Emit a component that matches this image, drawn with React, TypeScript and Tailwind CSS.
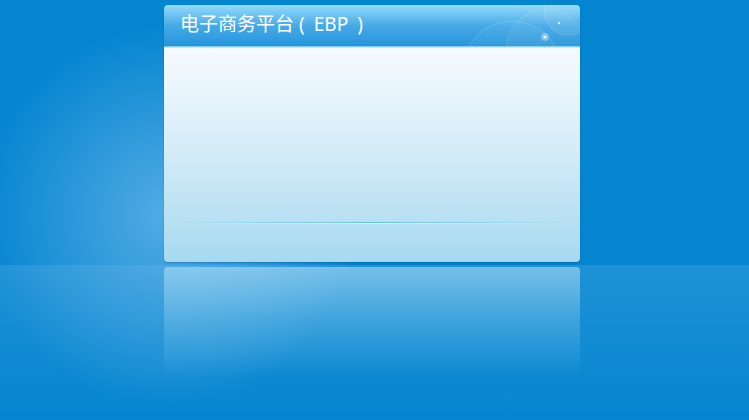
export default function App() {
  return (
    <div
      className="relative h-[420px] w-[749px] overflow-hidden bg-[#0585d0] bg-[radial-gradient(ellipse_190px_190px_at_170px_215px,rgba(110,185,235,0.75),rgba(5,133,208,0)_100%)]"
      style={{ fontFamily: '"Noto Sans", "Noto Sans CJK SC", sans-serif' }}
    >
      {/* окно */}
      <div className="flex h-[265px] flex-col pl-[164px] pt-[5px]">
        <div className="flex h-[257px] w-[416px] flex-col overflow-hidden rounded-[4px] shadow-[0_1px_2px_rgba(0,60,120,0.35)]">
          {/* заголовок */}
          <div className="relative flex h-[42px] shrink-0 items-start border-b border-[#7fcdf2] bg-gradient-to-b from-[#93dbfa] via-[#45aae6] to-[#2495dc] pl-4 pt-[8px]">
            <span className="relative z-10 flex items-baseline text-[19px] leading-[22px] text-white">
              <span>电子商务平台</span>
              <span className="ml-[5px]">(</span>
              <span className="ml-[9px]">EBP</span>
              <span className="ml-[9px]">)</span>
            </span>
            <svg
              className="absolute right-0 top-0"
              width="130"
              height="42"
              viewBox="0 0 130 42"
            >
              <circle cx="62" cy="66" r="50" fill="rgba(255,255,255,0.05)" stroke="rgba(255,255,255,0.14)" />
              <circle cx="96" cy="44" r="40" fill="rgba(255,255,255,0.05)" stroke="rgba(255,255,255,0.12)" />
              <circle cx="118" cy="6" r="24" fill="rgba(255,255,255,0.07)" stroke="rgba(255,255,255,0.15)" />
              <circle cx="95" cy="32" r="4" fill="rgba(255,255,255,0.3)" />
              <circle cx="95" cy="32" r="1.6" fill="#fff" />
              <circle cx="109" cy="18" r="1.2" fill="rgba(255,255,255,0.85)" />
            </svg>
          </div>
          {/* тело */}
          <div className="flex flex-1 flex-col border-t border-[#c9ecfb] bg-gradient-to-b from-[#f6fafe] via-[#d3ebf7] to-[#a6d9f0]">
            <div className="flex-1" />
            <div className="mx-[10px] h-px bg-gradient-to-r from-transparent via-[#63c3ea] to-transparent" />
            <div className="mx-[10px] h-px bg-gradient-to-r from-transparent via-[#d8f2fc] to-transparent" />
            <div className="h-[38px]" />
          </div>
        </div>
      </div>

      {/* пол и отражение */}
      <div className="h-[155px] bg-gradient-to-b from-[rgba(120,190,235,0.22)] to-transparent pl-[164px] pt-[2px]">
        <div className="h-[110px] w-[416px] rounded-t-[4px] bg-gradient-to-b from-[rgba(175,222,245,0.6)] via-[rgba(150,210,240,0.3)] to-transparent" />
      </div>
    </div>
  );
}
